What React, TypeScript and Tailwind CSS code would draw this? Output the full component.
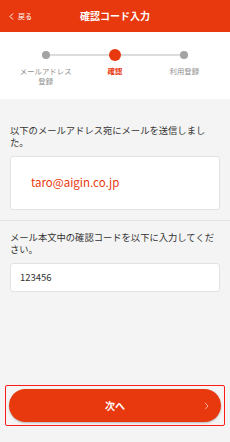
import React from "react";

const font = { fontFamily: '"Noto Sans CJK JP", "Noto Sans", sans-serif' };

function Step({ label, active }: { label: React.ReactNode; active?: boolean }) {
  return (
    <div className="flex flex-col items-center">
      <div className="h-[12px] flex items-center justify-center">
        {active ? (
          <span className="block w-[12px] h-[12px] rounded-full bg-[#e8380d]" />
        ) : (
          <span className="block w-[8px] h-[8px] rounded-full bg-[#a3a3a3]" />
        )}
      </div>
      <p
        className={`mt-[5px] text-[7.4px] leading-[10px] text-center ${
          active ? "text-[#e8380d] font-bold" : "text-[#8f8f8f]"
        }`}
      >
        {label}
      </p>
    </div>
  );
}

export default function App() {
  return (
    <div className="w-[230px] h-[442px] flex flex-col bg-[#f4f4f4]" style={font}>
      {/* Header */}
      <header className="h-[32px] shrink-0 bg-[#e8380d] grid grid-cols-[60px_1fr_60px] items-center">
        <button className="flex items-center gap-[4px] pl-[9px] text-white">
          <svg width="5" height="7" viewBox="0 0 5 7" fill="none">
            <path d="M4 0.5L1 3.5L4 6.5" stroke="white" strokeWidth="1" />
          </svg>
          <span className="text-[7px] leading-none">戻る</span>
        </button>
        <h1 className="text-center text-white font-bold text-[10px] leading-none">確認コード入力</h1>
        <span />
      </header>

      {/* Stepper */}
      <section className="h-[67px] shrink-0 bg-white pt-[17px] px-[11px] relative">
        <div className="absolute left-[46px] right-[45px] top-[22px] h-[1.5px] bg-[#dcdcdc]" />
        <div className="relative grid grid-cols-3">
          <Step
            label={
              <>
                メールアドレス
                <br />
                登録
              </>
            }
          />
          <Step label="確認" active />
          <Step label="利用登録" />
        </div>
      </section>

      {/* Sent address */}
      <section className="px-[10px] pt-[25px] pb-[10px] border-b border-[#e3e3e3]">
        <p className="text-[9.3px] leading-[12px] text-[#333]">
          以下のメールアドレス宛にメールを送信しました。
        </p>
        <div className="mt-[8px] h-[54px] bg-white border border-[#e2e2e2] rounded-[3px] flex items-center pl-[20px]">
          <span className="text-[11.5px] text-[#e8380d]">taro@aigin.co.jp</span>
        </div>
      </section>

      {/* Code input */}
      <section className="px-[10px] pt-[10px]">
        <p className="text-[9.3px] leading-[12px] text-[#333]">
          メール本文中の確認コードを以下に入力してください。
        </p>
        <div className="mt-[8px] h-[29px] bg-white border border-[#e2e2e2] rounded-[3px] flex items-center pl-[9px]">
          <span className="text-[9.5px] text-[#333]">123456</span>
        </div>
      </section>

      {/* Next button */}
      <div className="mt-auto mb-[16px] mx-[5px] p-[3px] border border-[#ff1a1a] rounded-[2px]">
        <button className="w-full h-[33px] rounded-full bg-[#e8380d] shadow-[0_1px_2px_rgba(0,0,0,0.25)] grid grid-cols-[30px_1fr_30px] items-center">
          <span />
          <span className="text-white font-bold text-[10px] leading-none text-center">次へ</span>
          <span className="flex justify-center">
            <svg width="5" height="8" viewBox="0 0 5 8" fill="none">
              <path d="M1 0.8L4 4L1 7.2" stroke="rgba(255,255,255,0.6)" strokeWidth="1" />
            </svg>
          </span>
        </button>
      </div>
    </div>
  );
}
